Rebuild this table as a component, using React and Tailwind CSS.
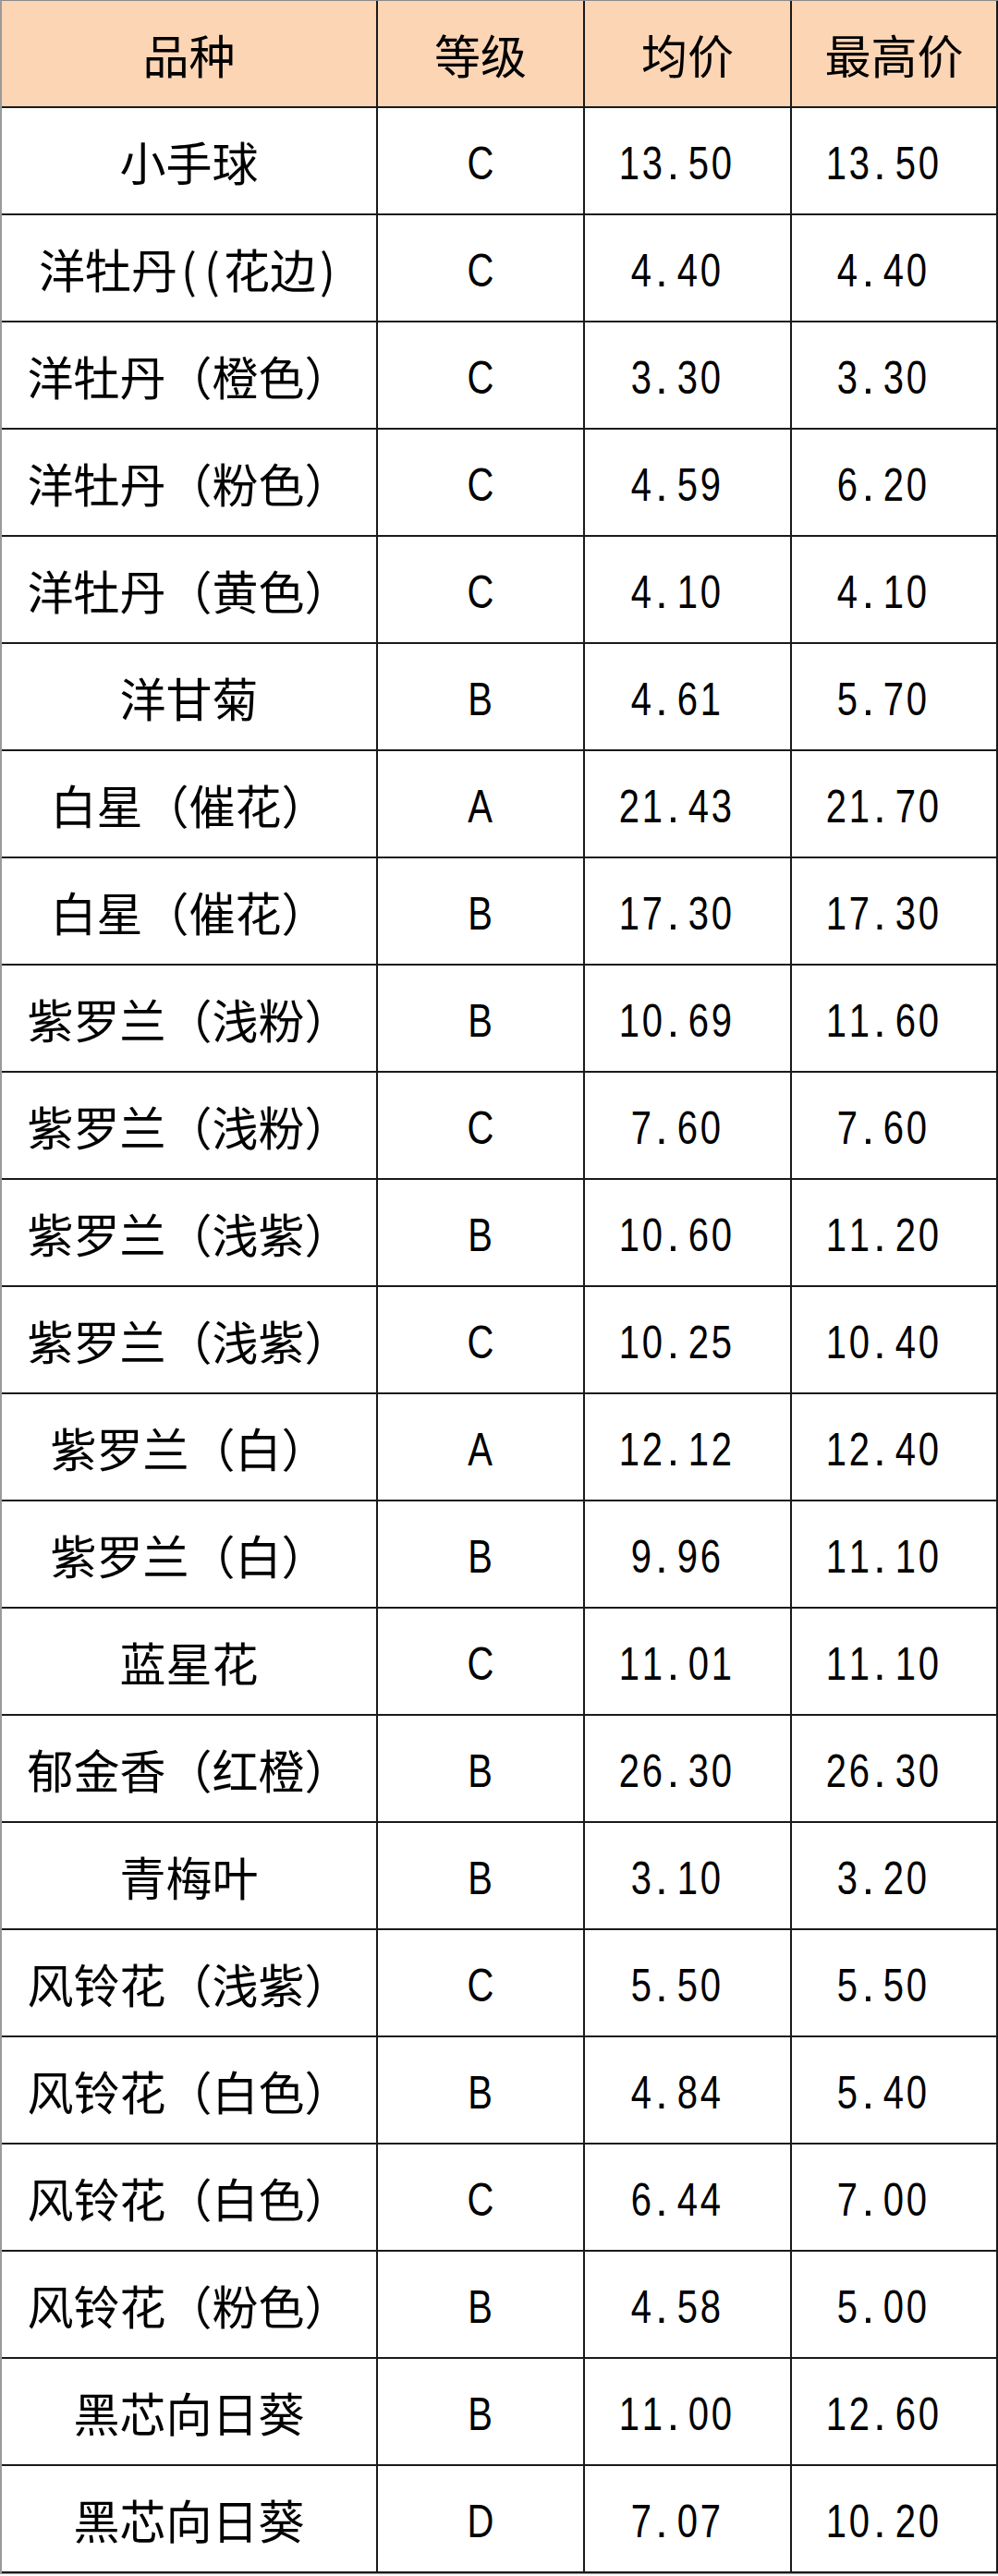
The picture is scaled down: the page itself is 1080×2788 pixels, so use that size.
const rows = [
  ["小手球", "C", "13.50", "13.50"],
  ["洋牡丹((花边)", "C", "4.40", "4.40"],
  ["洋牡丹（橙色）", "C", "3.30", "3.30"],
  ["洋牡丹（粉色）", "C", "4.59", "6.20"],
  ["洋牡丹（黄色）", "C", "4.10", "4.10"],
  ["洋甘菊", "B", "4.61", "5.70"],
  ["白星（催花）", "A", "21.43", "21.70"],
  ["白星（催花）", "B", "17.30", "17.30"],
  ["紫罗兰（浅粉）", "B", "10.69", "11.60"],
  ["紫罗兰（浅粉）", "C", "7.60", "7.60"],
  ["紫罗兰（浅紫）", "B", "10.60", "11.20"],
  ["紫罗兰（浅紫）", "C", "10.25", "10.40"],
  ["紫罗兰（白）", "A", "12.12", "12.40"],
  ["紫罗兰（白）", "B", "9.96", "11.10"],
  ["蓝星花", "C", "11.01", "11.10"],
  ["郁金香（红橙）", "B", "26.30", "26.30"],
  ["青梅叶", "B", "3.10", "3.20"],
  ["风铃花（浅紫）", "C", "5.50", "5.50"],
  ["风铃花（白色）", "B", "4.84", "5.40"],
  ["风铃花（白色）", "C", "6.44", "7.00"],
  ["风铃花（粉色）", "B", "4.58", "5.00"],
  ["黑芯向日葵", "B", "11.00", "12.60"],
  ["黑芯向日葵", "D", "7.07", "10.20"],
];

const cjk = "font-['Noto_Sans_CJK_SC','Noto_Sans',sans-serif]";
const lat = "font-['Liberation_Sans','Noto_Sans_CJK_SC',sans-serif]";
const grid = "grid grid-cols-[407px_224px_224px_1fr]";
const cell = "flex items-center justify-center border-r-2 border-b-2 border-[#1a1a1a] text-[50px] leading-none text-black";

function Mono({ text }) {
  return (
    <span className="flex">
      {text.split("").map((ch, i) =>
        ch === "." ? (
          <span key={i} className="inline-block w-[25px] pl-[3px] text-left">.</span>
        ) : (
          <span key={i} className="flex w-[25px] justify-center">
            <span className="inline-block scale-x-[0.8]">{ch}</span>
          </span>
        )
      )}
    </span>
  );
}

function Name({ text }) {
  return (
    <span className="flex">
      {text.split("").map((ch, i) =>
        ch === "(" || ch === ")" ? (
          <span key={i} className="flex w-[25px] justify-center">{ch}</span>
        ) : (
          <span key={i}>{ch}</span>
        )
      )}
    </span>
  );
}

export default function App() {
  return (
    <div className="w-[1080px] h-[2788px] bg-white">
      <div className="border-l-2 border-t border-l-[#9a9a9a] border-t-[#8a8a8a] border-b border-b-[#9a9a9a]">
        <div className={`${grid} h-[116px] bg-[#fcd5b4]`}>
          <div className={`${cell} ${cjk}`}>品种</div>
          <div className={`${cell} ${cjk}`}>等级</div>
          <div className={`${cell} ${cjk}`}>均价</div>
          <div className={`${cell} ${cjk}`}>最高价</div>
        </div>
        {rows.map((r, i) => (
          <div key={i} className={`${grid} h-[116px]`}>
            <div className={`${cell} ${cjk}`}><Name text={r[0]} /></div>
            <div className={`${cell} ${lat} pt-[6px]`}><Mono text={r[1]} /></div>
            <div className={`${cell} ${lat} pt-[6px] pr-[26px]`}><Mono text={r[2]} /></div>
            <div className={`${cell} ${lat} pt-[6px] pr-[26px]`}><Mono text={r[3]} /></div>
          </div>
        ))}
      </div>
    </div>
  );
}
